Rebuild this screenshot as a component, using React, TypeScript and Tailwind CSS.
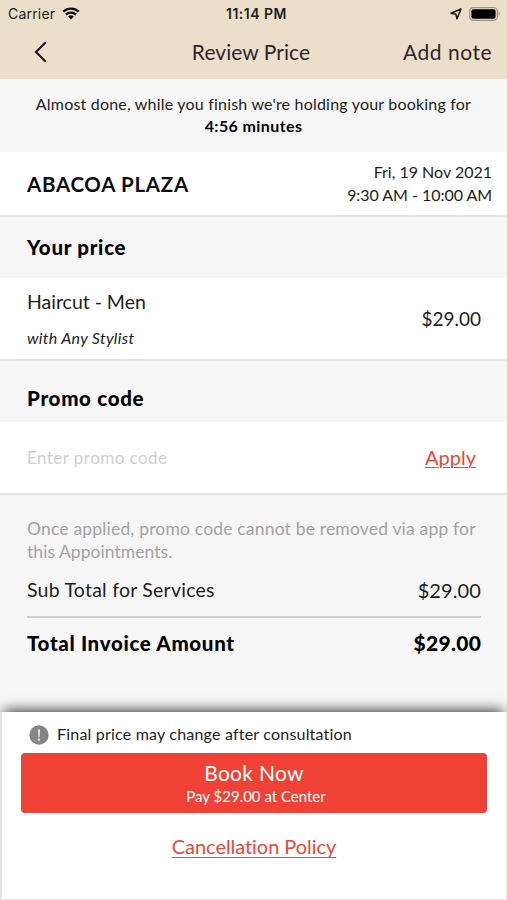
function StatusBar() {
  return (
    <div className="grid h-[27px] grid-cols-[1fr_auto_1fr] items-center pl-2 pr-[7px] font-['Inter',sans-serif] text-[13px] leading-[17px] text-[#201d1a]">
      <div className="flex items-center gap-[7px]">
        <span className="text-[14px] tracking-[0.2px]">Carrier</span>
        <svg width="18" height="13" viewBox="0 0 18 13" fill="none" stroke="#080808" strokeWidth="2.3">
          <path d="M1.2 4.7a11.4 11.4 0 0 1 15.6 0" />
          <path d="M3.9 7.6a7.5 7.5 0 0 1 10.2 0" />
          <path d="M9 12.4 6.1 9.5a4.4 4.4 0 0 1 5.8 0Z" fill="#080808" stroke="none" />
        </svg>
      </div>
      <span className="ml-[5px] whitespace-nowrap text-center text-[14px] font-semibold tracking-[0.5px]">11:14 PM</span>
      <div className="flex items-center justify-end gap-[7px]">
        <svg width="12" height="12" viewBox="0 0 12 12" fill="none" stroke="#15120f" strokeWidth="1.5" strokeLinejoin="round">
          <path d="M11 1 7 10.8 5.9 6.2 1 5.2Z" />
        </svg>
        <svg width="31" height="14" viewBox="0 0 31 14">
          <rect x="0.7" y="0.7" width="27.6" height="12.6" rx="3.6" fill="none" stroke="#9c9482" strokeWidth="1.2" />
          <rect x="2.4" y="2.3" width="24.2" height="9.4" rx="2" fill="#000" />
          <path d="M29.6 4.8c1.5.7 1.5 3.7 0 4.4Z" fill="#9c9482" />
        </svg>
      </div>
    </div>
  );
}

function NavBar() {
  return (
    <div className="grid h-[52px] grid-cols-[1fr_auto_1fr] items-center pb-[2px] pl-[10px] pr-[15px] text-[21px] leading-[26px] text-[#30242f]">
      <svg className="ml-[23px]" width="15" height="22" viewBox="0 0 15 22" fill="none" stroke="#211827" strokeWidth="2.2" strokeLinecap="round">
        <path d="M12 2 3 11l9 9" />
      </svg>
      <span className="tracking-[0.05px]">Review Price</span>
      <span className="text-right tracking-[0.5px]">Add note</span>
    </div>
  );
}

function SectionTitle({ children }: { children: string }) {
  return <h2 className="text-[20.5px] font-black leading-6 tracking-[0.7px] text-black">{children}</h2>;
}

export default function App() {
  return (
    <main className="flex h-[900px] w-[507px] flex-col overflow-hidden bg-[#f6f6f6] font-['Lato',sans-serif] text-[#1d1d1d] [font-variant-ligatures:none]">
      <header className="bg-[#ebdfca]">
        <StatusBar />
        <NavBar />
      </header>

      <section className="h-[73px] pt-[14px] text-center text-[16px] leading-[22px]">
        <p className="whitespace-nowrap tracking-[0.2px]">Almost done, while you finish we're holding your booking for</p>
        <p className="font-bold tracking-[0.4px] text-black">4:56 minutes</p>
      </section>

      <section className="flex h-[65px] items-center justify-between border-b-2 border-[#e3e3e3] bg-white pl-[27px] pr-[15px]">
        <h1 className="text-[20.5px] font-bold leading-6 tracking-[0.7px] text-[#0b0b0b]">ABACOA PLAZA</h1>
        <div className="pb-px text-right text-[16px] leading-[23px]">
          <p>Fri, 19 Nov 2021</p>
          <p className="tracking-[-0.04px]">9:30 AM - 10:00 AM</p>
        </div>
      </section>

      <section className="flex h-[61px] items-center pb-[2px] pl-[27px]">
        <SectionTitle>Your price</SectionTitle>
      </section>
      <section className="flex h-[83px] items-center justify-between border-b-2 border-[#e3e3e3] bg-white pl-[27px] pr-[26px]">
        <div className="pt-[2px]">
          <p className="text-[19.5px] leading-9 tracking-[-0.02px]">Haircut - Men</p>
          <p className="text-[16px] italic leading-9 tracking-[0.3px]">with Any Stylist</p>
        </div>
        <span className="text-[19px] leading-6">$29.00</span>
      </section>

      <section className="flex h-[61px] items-end pb-[12px] pl-[27px]">
        <SectionTitle>Promo code</SectionTitle>
      </section>
      <section className="flex h-[73px] items-center justify-between border-b-2 border-[#e3e3e3] bg-white pl-[27px] pr-[31px]">
        <span className="text-[17px] leading-6 tracking-[0.45px] text-[#cfcfcf]">Enter promo code</span>
        <span className="pb-px text-[20px] leading-6 text-[#e8483b] underline decoration-1 underline-offset-[2px]">Apply</span>
      </section>

      <section className="pl-[27px] pr-[26px] pt-[22px]">
        <p className="whitespace-nowrap text-[17.5px] leading-[23px] tracking-[0.18px] text-[#a2a2a2]">
          Once applied, promo code cannot be removed via app for
          <br />
          <span className="tracking-[0.05px]">this Appointments.</span>
        </p>
        <div className="mt-[15px] flex h-[24px] items-center justify-between">
          <span className="text-[19.5px] tracking-[0.23px]">Sub Total for Services</span>
          <span className="pb-px text-[20px] tracking-[0.1px]">$29.00</span>
        </div>
        <div className="mt-[14px] h-[2px] bg-[#cecece]" />
        <div className="mt-[13px] flex h-[24px] items-center justify-between text-[20.5px] font-black text-black">
          <span className="tracking-[0.67px]">Total Invoice Amount</span>
          <span className="-mr-[0.3px] text-[21px] tracking-[0.3px]">$29.00</span>
        </div>
      </section>

      <footer className="mt-auto flex h-[188px] flex-col items-center border-b border-l-2 border-r border-[#e4e4e4] bg-white px-[19px] pt-[11px] shadow-[0_-6px_12px_-4px_rgba(0,0,0,0.75)]">
        <div className="flex h-[22px] items-center gap-[8px] self-start pl-2 pt-px">
          <svg width="20" height="20" viewBox="0 0 20 20">
            <circle cx="10" cy="10" r="9.7" fill="#858585" />
            <path d="M9 4.5h2l-.4 7.7H9.4Z" fill="#eee" />
            <circle cx="10" cy="14.6" r="1.2" fill="#eee" />
          </svg>
          <span className="pb-px text-[16px] tracking-[0.2px]">Final price may change after consultation</span>
        </div>
        <button className="mt-[8px] flex h-[60px] w-full shrink-0 flex-col items-center rounded-[4px] bg-[#ef4135] pt-[7px] text-white">
          <span className="text-[21px] leading-[25px] tracking-[0.3px]">Book Now</span>
          <span className="ml-[4px] text-[15px] leading-[23px]">Pay $29.00 at Center</span>
        </button>
        <a className="mt-[20px] text-[20px] leading-[26px] tracking-[-0.05px] text-[#e8483b] underline decoration-1 underline-offset-[3px]">
          Cancellation Policy
        </a>
      </footer>
    </main>
  );
}
